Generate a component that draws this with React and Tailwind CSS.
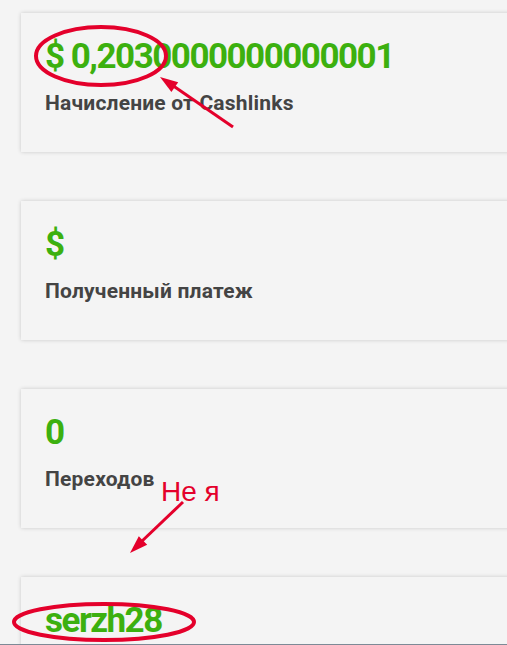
const stats = [
  { value: '$ 0,2030000000000001', label: 'Начисление от Cashlinks' },
  { value: '$', label: 'Полученный платеж' },
  { value: '0', label: 'Переходов' },
  { value: 'serzh28', label: '' },
]

function StatCard({ value, label }) {
  return (
    <div className="w-[520px] h-[139px] shrink-0 bg-[#f4f4f4] shadow-[0_0_4px_rgba(0,0,0,0.18)] pl-6 pt-6">
      <div className="text-[35px] leading-[40px] font-bold tracking-[-1.5px] text-[#3cb00f]">{value}</div>
      {label && (
        <div className="mt-[14px] text-[21px] leading-6 font-bold tracking-[0.2px] text-[#444]">{label}</div>
      )}
    </div>
  )
}

export default function App() {
  return (
    <div className="relative h-[645px] overflow-hidden bg-[#f4f4f4] border-b border-[#7d8a96] font-['Roboto',sans-serif]">
      <div className="flex flex-col gap-[49px] pt-[13px] pl-[21px]">
        {stats.map((s) => (
          <StatCard key={s.value} value={s.value} label={s.label} />
        ))}
      </div>

      {/* annotations drawn over the screenshot */}
      <svg className="absolute inset-0 pointer-events-none" width="507" height="645" viewBox="0 0 507 645">
        <ellipse cx="101" cy="56" rx="65" ry="29" fill="none" stroke="#e4002b" strokeWidth="4" />
        <line x1="233" y1="127" x2="172" y2="85" stroke="#e4002b" strokeWidth="3" />
        <polygon points="160,77 178.2,82.2 171.4,92.1" fill="#e4002b" />
        <line x1="183" y1="502" x2="140" y2="543" stroke="#e4002b" strokeWidth="3" />
        <polygon points="130,553 147.2,544.8 138.8,536.2" fill="#e4002b" />
        <ellipse cx="104" cy="622" rx="90" ry="18" fill="none" stroke="#e4002b" strokeWidth="4" />
      </svg>
      <div className="absolute left-[161px] top-[478px] text-[28px] leading-none text-[#e4002b] font-['Liberation_Sans',sans-serif]">
        Не я
      </div>
    </div>
  )
}
